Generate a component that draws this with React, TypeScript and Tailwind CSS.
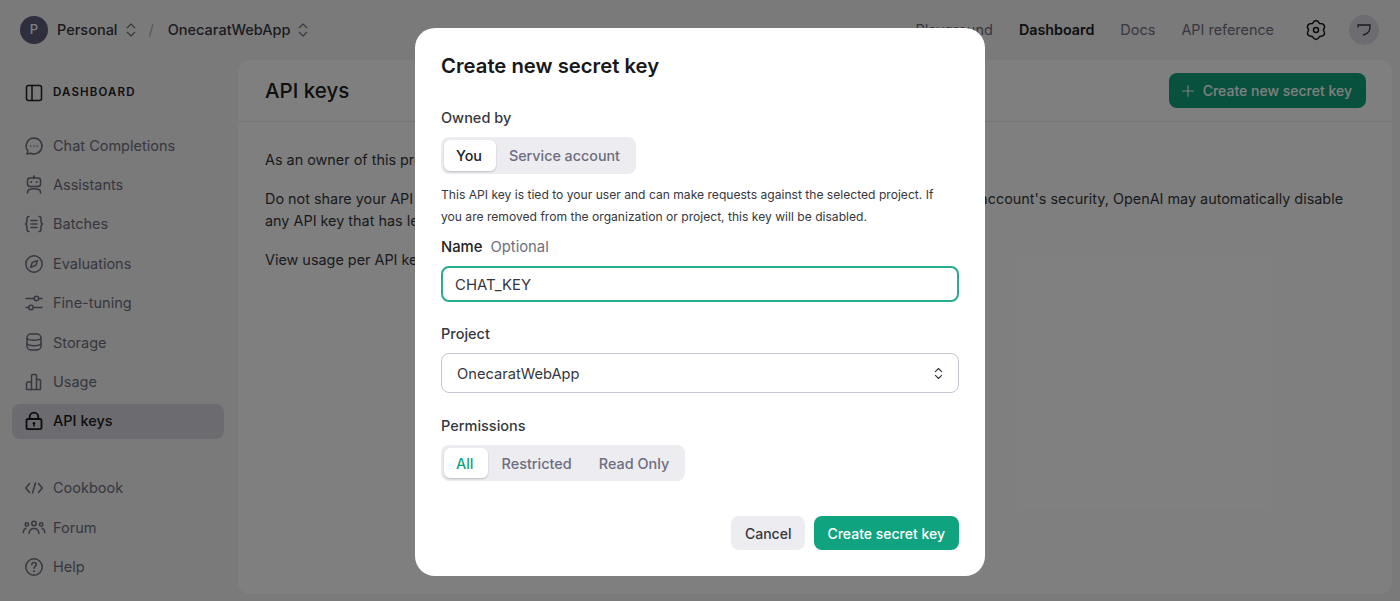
import { ChevronsUpDown, Plus } from "lucide-react";

const font = "font-['Inter','Liberation_Sans',sans-serif]";

function Icon({ children, className = "" }: { children: React.ReactNode; className?: string }) {
  return (
    <svg
      viewBox="0 0 20 20"
      fill="none"
      stroke="currentColor"
      strokeWidth="1.5"
      strokeLinecap="round"
      strokeLinejoin="round"
      className={"w-5 h-5 shrink-0 overflow-visible " + className}
    >
      {children}
    </svg>
  );
}

const icons: Record<string, React.ReactNode> = {
  chat: (
    <>
      <path d="M10 2a8 8 0 1 1-3.4 15.25L3 18l.9-3.1A8 8 0 0 1 10 2Z" />
      <path d="M6.8 10h.01M10 10h.01M13.2 10h.01" />
    </>
  ),
  bot: (
    <>
      <rect x="3.5" y="3" width="13" height="8.5" rx="2.5" />
      <path d="M10 1.2v1.6M7.2 7h.01M12.8 7h.01" strokeWidth="2" />
      <path d="M3.5 18v-.8c0-2 2-3.4 6.5-3.4s6.5 1.4 6.5 3.4v.8" />
    </>
  ),
  batches: (
    <>
      <path d="M5 2.5c-1.6 0-2 .8-2 2v3c0 1.2-.5 2-1.5 2.5 1 .5 1.5 1.3 1.5 2.5v3c0 1.2.4 2 2 2" />
      <path d="M15 2.5c1.6 0 2 .8 2 2v3c0 1.2.5 2 1.5 2.5-1 .5-1.5 1.3-1.5 2.5v3c0 1.2-.4 2-2 2" />
      <path d="M7 6.5h6M7 10h6M7 13.5h6" />
    </>
  ),
  evals: (
    <>
      <circle cx="10" cy="10" r="8.2" />
      <path d="M13.4 6.6l-1.5 4.7-5.3 2.1 1.7-5 5.1-1.8Z" />
    </>
  ),
  tuning: (
    <>
      <circle cx="12.5" cy="5.5" r="2.2" />
      <circle cx="7" cy="14.5" r="2.2" />
      <path d="M2 5.5h8M15 5.5h3M2 14.5h2.5M9.5 14.5H18" />
    </>
  ),
  storage: (
    <>
      <rect x="3" y="2" width="14" height="16" rx="4" />
      <path d="M3 6.5c1.5 1.2 4 1.7 7 1.7s5.5-.5 7-1.7M3 12c1.5 1.2 4 1.7 7 1.7s5.5-.5 7-1.7" />
    </>
  ),
  usage: (
    <>
      <path d="M2.5 17.5v-6.2a1.2 1.2 0 0 1 1.2-1.2h3.8V3.7a1.2 1.2 0 0 1 1.2-1.2h2.6a1.2 1.2 0 0 1 1.2 1.2v3.8h2.8a1.2 1.2 0 0 1 1.2 1.2v8.8Z" />
      <path d="M7.5 10.1v7.4M12.5 7.5v10" />
    </>
  ),
  lock: (
    <>
      <rect x="2.5" y="8" width="15" height="10.2" rx="1.5" strokeWidth="1.8" />
      <path d="M5.7 8V6a4.3 4.3 0 0 1 8.6 0v2" strokeWidth="1.8" />
      <circle cx="10" cy="12.3" r="1.3" fill="currentColor" stroke="none" />
      <path d="M10 12.5v2.500" strokeWidth="1.5" />
    </>
  ),
  code: <path d="M5.5 5.5 1.8 10l3.7 4.5M14.5 5.5l3.7 4.5-3.7 4.5M11.5 5 8.5 15" />,
  forum: (
    <>
      <circle cx="10" cy="5.5" r="2.2" />
      <circle cx="2.8" cy="6.5" r="1.7" />
      <circle cx="17.2" cy="6.5" r="1.7" />
      <path d="M5 15.5c.4-3 2.2-5 5-5s4.6 2 5 5" />
      <path d="M-.8 14.5c.2-2 1-3.4 2.7-4.2M20.8 14.5c-.2-2-1-3.4-2.7-4.2" />
    </>
  ),
  help: (
    <>
      <circle cx="10" cy="10" r="8.2" />
      <path d="M7.8 7.8c0-1.3 1-2.2 2.3-2.2s2.2.9 2.2 2c0 1.800-2.3 1.800-2.3 3.700" />
      <path d="M10 14.3h.01" strokeWidth="2" />
    </>
  ),
};

const topItems = [
  ["chat", "Chat Completions"],
  ["bot", "Assistants"],
  ["batches", "Batches"],
  ["evals", "Evaluations"],
  ["tuning", "Fine-tuning"],
  ["storage", "Storage"],
  ["usage", "Usage"],
  ["lock", "API keys"],
];
const bottomItems = [
  ["code", "Cookbook"],
  ["forum", "Forum"],
  ["help", "Help"],
];

function NavRow({ icon, label, active }: { icon: string; label: string; active?: boolean }) {
  return (
    <div
      className={
        "flex items-center gap-[9px] h-[35px] mb-[4.4px] pl-[12px] rounded-lg text-[14.5px] " +
        (active ? "bg-[#d9d9e0] text-[#18181b] font-medium" : "text-[#6e6e80]")
      }
    >
      <span className={active ? "text-[#18181b]" : "text-[#6e6e80]"}>
        <Icon>{icons[icon]}</Icon>
      </span>
      {label}
    </div>
  );
}

function Segment({ items, accent, className }: { items: string[]; accent?: boolean; className: string }) {
  return (
    <div className={"inline-flex p-[3px] rounded-lg bg-[#ececf1] font-medium text-[#6e6e80] " + className}>
      {items.map((t, i) => (
        <div
          key={t}
          className={
            "flex items-center pt-[1px] rounded-md " +
            (i === 0
              ? "pl-[12px] pr-[14px] bg-white shadow-[0_1px_2px_rgba(0,0,0,0.2)] " +
                (accent ? "text-[#10a37f]" : "text-[#202123]")
              : "px-[13px]")
          }
        >
          {t}
        </div>
      ))}
    </div>
  );
}

function Modal() {
  return (
    <div className="w-[570px] h-[548px] rounded-[20px] bg-white px-[26px] pt-[24px] text-[#202123]">
      <h2 className="text-[20.3px] leading-7 font-semibold text-[#18181b]">Create new secret key</h2>
      <div className="mt-[28px] text-[14.5px] leading-5 font-medium text-[#353740]">Owned by</div>
      <div className="mt-[9px] h-[37px]">
        <Segment items={["You", "Service account"]} className="h-[37px] text-[14.3px]" />
      </div>
      <p className="mt-[10px] pr-[10px] text-[12.1px] leading-[22px] text-[#353740]">
        This API key is tied to your user and can make requests against the selected project. If you are removed
        from the organization or project, this key will be disabled.
      </p>
      <div className="mt-[9px] flex gap-[8px] text-[14.8px] leading-5">
        <span className="font-medium text-[#202123]">Name</span>
        <span className="text-[#6e6e80]">Optional</span>
      </div>
      <div className="mt-[9px] h-9 flex items-center pt-[2px] px-[12px] rounded-lg border-2 border-[#10a37f]/90 text-[14.9px] text-[#353740]">
        CHAT_KEY
      </div>
      <div className="mt-[22px] text-[14.5px] leading-5 font-medium text-[#353740]">Project</div>
      <div className="mt-[9px] h-10 flex items-center justify-between pl-[15px] pr-[12px] rounded-lg border border-[#c5c5d2] text-[14.7px] text-[#353740]">
        <span className="pt-[2px]">OnecaratWebApp</span>
        <ChevronsUpDown className="w-[15px] h-[15px]" strokeWidth={1.8} />
      </div>
      <div className="mt-[23px] text-[14.5px] leading-5 font-medium text-[#353740]">Permissions</div>
      <div className="mt-[9px] h-9">
        <Segment items={["All", "Restricted", "Read Only"]} accent className="h-9 text-[14.45px] gap-[1px]" />
      </div>
      <div className="mt-[35px] flex justify-end gap-[9px] text-[14px] font-medium">
        <div className="h-[34px] px-[14px] flex items-center rounded-lg bg-[#ececf1] text-[#353740]">Cancel</div>
        <div className="h-[34px] pl-[13px] pr-[14px] flex items-center rounded-lg bg-[#10a37f] text-white">
          Create secret key
        </div>
      </div>
    </div>
  );
}

export default function App() {
  return (
    <div className={"relative w-[1400px] h-[601px] overflow-hidden bg-[#f4f4f6] " + font}>
      <header className="h-[60px] flex items-center pl-[20px] pr-[21px] text-[14.5px]">
        <div className="w-7 h-7 rounded-full bg-[#5d5d7a] text-white flex items-center justify-center text-[13px] font-medium">
          P
        </div>
        <span className="ml-[9px] font-medium text-[#353740]">Personal</span>
        <ChevronsUpDown className="ml-[4px] w-[18px] h-[18px] text-[#6e6e80]" strokeWidth={1.5} />
        <span className="ml-[9px] text-[#acacbe]">/</span>
        <span className="ml-[14px] font-medium text-[#353740]">OnecaratWebApp</span>
        <ChevronsUpDown className="ml-[4px] w-[18px] h-[18px] text-[#6e6e80]" strokeWidth={1.5} />
        <div className="ml-auto flex items-center text-[#6e6e80]">
          <span>Playground</span>
          <span className="ml-[26px] font-semibold text-[14.3px] text-[#202123]">Dashboard</span>
          <span className="ml-[26px]">Docs</span>
          <span className="ml-[26px] text-[14.4px]">API reference</span>
          <span className="ml-[32px] text-[#18181b]">
            <Icon>
              <path d="M13.7 3.6Q20.83 3.75 17.4 10Q20.83 16.25 13.7 16.4Q10 22.5 6.3 16.4Q-.83 16.25 2.6 10Q-.83 3.75 6.3 3.6Q10 -2.5 13.7 3.6Z" />
              <circle cx="10" cy="10" r="2.5" />
            </Icon>
          </span>
          <div className="ml-[23px] w-[30px] h-[30px] rounded-full bg-[#d9d9e3] flex items-center justify-center text-[#353740]">
            <svg viewBox="0 0 14 14" fill="none" stroke="currentColor" strokeWidth="1.3" className="w-3.5 h-3.5">
              <path d="M1 4.5V2h12v2c0 4-3 7-7 8" />
            </svg>
          </div>
        </div>
      </header>
      <div className="flex h-[541px]">
        <aside className="w-[238px] shrink-0 pl-[12px] pr-[14px]">
          <div className="flex items-center gap-[9px] h-[24px] mt-[21px] pl-[12px] text-[11.5px] font-semibold tracking-[0.1em] text-[#202123]">
            <Icon>
              <rect x="2.5" y="2.5" width="15" height="15" rx="2" />
              <path d="M8 2.5v15" />
            </Icon>
            DASHBOARD
          </div>
          <nav className="mt-[23px]">
            {topItems.map(([icon, label]) => (
              <NavRow key={label} icon={icon} label={label} active={label === "API keys"} />
            ))}
          </nav>
          <nav className="mt-[32px]">
            {bottomItems.map(([icon, label]) => (
              <NavRow key={label} icon={icon} label={label} />
            ))}
          </nav>
        </aside>
        <main className="w-[1154px] h-[534px] rounded-xl bg-white text-[14.4px] text-[#353740]">
          <div className="h-[62px] flex items-center justify-between pl-[27px] pr-[26px] border-b border-[#ececf1]">
            <h1 className="pt-[2px] text-[20.5px] font-medium text-[#202123]">API keys</h1>
            <div className="h-[35px] flex items-center gap-[6px] pl-[10px] pr-[14px] rounded-lg bg-[#10a37f] text-white text-[14px] font-medium">
              <Plus className="w-[18px] h-[18px]" strokeWidth={1.5} />
              Create new secret key
            </div>
          </div>
          <div className="pl-[27px] pr-[27px] pt-[27px] leading-[22px]">
            <p>As an owner of this project, you can view and manage all API keys in this project.</p>
            <p className="mt-[17px]">
              Do not share your API key with others or expose it in a browser or other client-side code. To protect
              your account's security, OpenAI may automatically disable any API key that has leaked publicly.
            </p>
            <p className="mt-[17px]">View usage per API key on the Usage page.</p>
          </div>
        </main>
      </div>
      <div className="absolute inset-0 bg-black/50 flex justify-center pt-[28px]">
        <Modal />
      </div>
    </div>
  );
}
